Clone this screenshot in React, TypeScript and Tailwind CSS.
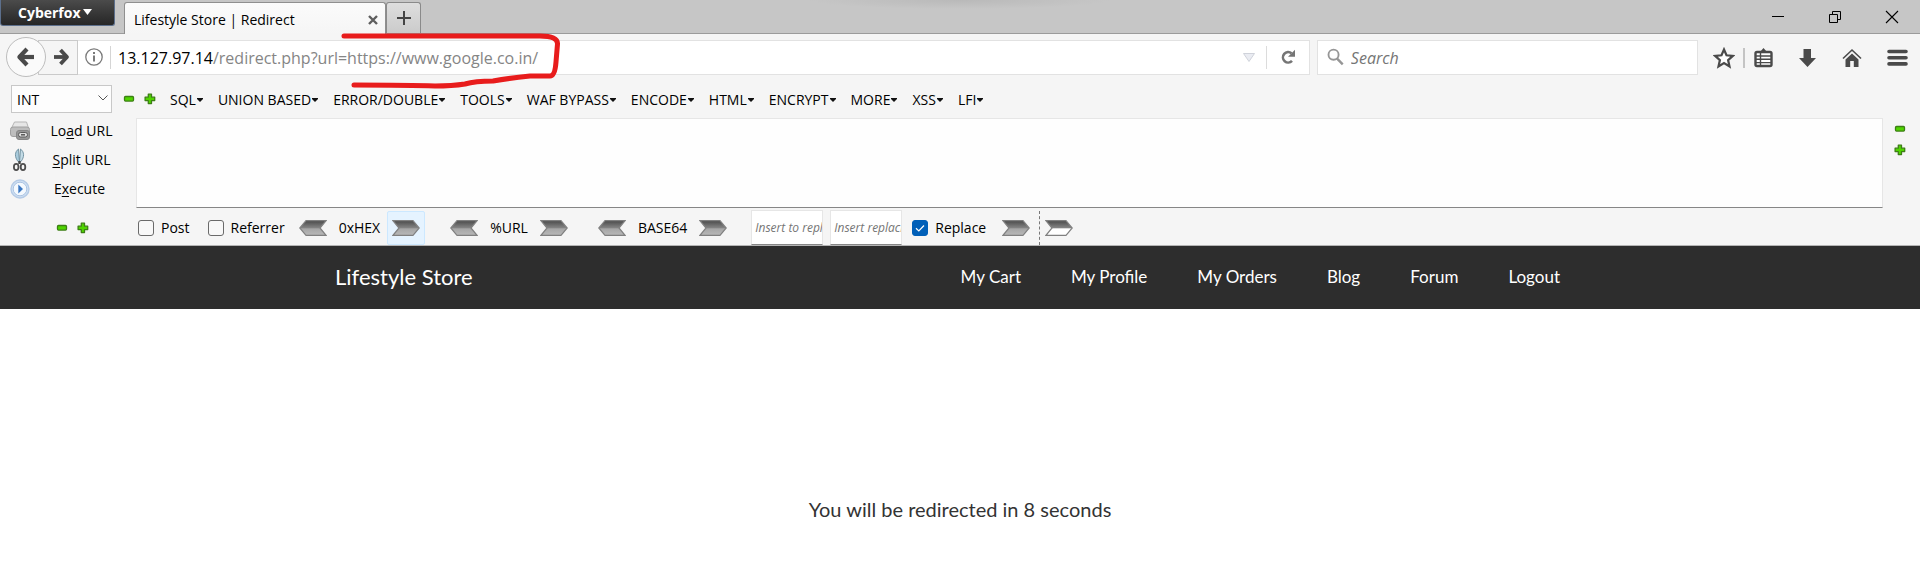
import React from "react";

const ui = "font-['Open_Sans','Noto_Sans',sans-serif]";

function Minus() {
  return (
    <svg width="12" height="12" viewBox="0 0 12 12">
      <rect x="1.5" y="3.5" width="9" height="4.6" rx="1" fill="#4fd400" stroke="#3c7f14" strokeWidth="1.3" />
    </svg>
  );
}

function Plus() {
  return (
    <svg width="12" height="12" viewBox="0 0 12 12">
      <path
        d="M4.3 1.2h3.2v3h3.2v3.4H7.5v3H4.3v-3H1.1V4.2h3.2z"
        fill="#4fd400"
        stroke="#3c7f14"
        strokeWidth="1.3"
        strokeLinejoin="round"
      />
    </svg>
  );
}

function Arrow({ id, left = false, light = false }: { id: string; left?: boolean; light?: boolean }) {
  return (
    <svg width="28" height="16" viewBox="0 0 28 16">
      <defs>
        <linearGradient id={id} x1="0" y1="0" x2="0" y2="1">
          <stop offset="0" stopColor="#4a4a4a" />
          <stop offset="0.5" stopColor="#858585" />
          <stop offset="0.55" stopColor={light ? "#ffffff" : "#a6a6a6"} />
          <stop offset="1" stopColor={light ? "#ffffff" : "#b8b8b8"} />
        </linearGradient>
      </defs>
      <path
        d={left ? "M27 .7H7L.8 8 7 15.3h20L21 8z" : "M1 .7h20L27.2 8 21 15.3H1L7 8z"}
        fill={`url(#${id})`}
        stroke="#808080"
        strokeWidth="1.2"
      />
    </svg>
  );
}

function Codec({ name, hot = false, id }: { name: string; hot?: boolean; id: string }) {
  return (
    <div className="flex items-center">
      <button aria-label={`${name} decode`} className="flex h-[34px] w-[38px] items-center justify-center">
        <Arrow id={id + "l"} left />
      </button>
      <span className="px-[7px] text-center">{name}</span>
      <button
        aria-label={`${name} encode`}
        className={
          hot
            ? "flex h-[34px] w-[38px] items-center justify-center rounded-[2px] border border-[#cce8ff] bg-[#e5f3ff]"
            : "flex h-[34px] w-[38px] items-center justify-center"
        }
      >
        <Arrow id={id + "r"} />
      </button>
    </div>
  );
}

function TitleBar() {
  return (
    <header className="flex h-[34px] items-start border-b border-[#9b9b9b] bg-[#c6c6c6] bg-[radial-gradient(150px_9px_at_50%_0,#b9b9b9,#c6c6c6)]">
      <button className="flex h-[26px] w-[115px] items-start gap-[2px] rounded-b-[3px] border border-t-0 border-[#5c6f8c] bg-linear-to-b from-[#4b4b4b] to-[#262626] pt-[3px] pl-[17px] text-[14px] leading-[20px] font-bold text-white">
        Cyberfox
        <svg width="9" height="6" viewBox="0 0 9 6" className="mt-[6px]">
          <path d="M0 0h9L4.500 6z" fill="#fff" />
        </svg>
      </button>
      <div className="mt-[2px] ml-[9px] flex h-[32px] w-[262px] items-center justify-between rounded-t-[3px] border border-b-0 border-[#8f8f8f] bg-linear-to-b from-[#fbfbfb] to-[#f5f5f5] pt-[2px] pr-[7px] pl-[9px]">
        <span className="text-[14px] leading-[20px]">Lifestyle Store | Redirect</span>
        <button aria-label="Close tab" className="flex">
          <svg width="10" height="10" viewBox="0 0 10 10">
            <path d="M1 1l8 8M9 1L1 9" stroke="#5e5e5e" strokeWidth="2.4" />
          </svg>
        </button>
      </div>
      <button
        aria-label="New tab"
        className="mt-[2px] flex h-[31px] w-[35px] items-center justify-center rounded-t-[3px] border border-b-0 border-[#8a8a8a] bg-linear-to-b from-[#dedede] to-[#cbcbcb]"
      >
        <svg width="16" height="16" viewBox="0 0 16 16">
          <path d="M8 1v14M1 8h14" stroke="#444" strokeWidth="2" />
        </svg>
      </button>
      <div className="ml-auto flex h-[33px] items-center">
        <button aria-label="Minimize" className="flex w-[57px] justify-center">
          <svg width="14" height="14" viewBox="0 0 14 14">
            <path d="M1 6.5h12" stroke="#000" />
          </svg>
        </button>
        <button aria-label="Restore" className="flex w-[57px] justify-center">
          <svg width="14" height="14" viewBox="0 0 14 14" fill="none" stroke="#000">
            <path d="M1.5 4.5h8v8h-8zM4.5 4V1.5h8v8H10" />
          </svg>
        </button>
        <button aria-label="Close" className="flex w-[57px] justify-center">
          <svg width="14" height="14" viewBox="0 0 14 14">
            <path d="M1 1l12 12M13 1L1 13" stroke="#000" strokeWidth="1.1" />
          </svg>
        </button>
      </div>
    </header>
  );
}

function NavBar() {
  return (
    <div className="flex h-[46px] items-center pl-[6px]">
      <button
        aria-label="Back"
        className="z-10 flex h-[40px] w-[40px] shrink-0 items-center justify-center rounded-full border border-[#bdbdbd] bg-[#fafafa]"
      >
        <svg width="20" height="20" viewBox="0 0 20 20" fill="none" stroke="#4a4a4a" strokeWidth="4.2">
          <path d="M3 10h15" />
          <path d="M11 2L3.4 10l7.6 8" strokeLinejoin="round" />
        </svg>
      </button>
      <button
        aria-label="Forward"
        className="-ml-[8px] flex h-[35px] w-[40px] shrink-0 items-center justify-center border border-[#cacaca] bg-[#f5f5f5] pl-[7px]"
      >
        <svg width="16" height="18" viewBox="0 0 16 18" fill="none" stroke="#4a4a4a" strokeWidth="3.8">
          <path d="M0 9h13" />
          <path d="M6.500 2L13 9l-6.500 7" strokeLinejoin="round" />
        </svg>
      </button>
      <div className="flex h-[35px] flex-1 items-center border border-l-0 border-[#e2e2e2] bg-white">
        <button aria-label="Site information" className="ml-[7px] flex">
          <svg width="18" height="18" viewBox="0 0 18 18" fill="none" stroke="#7a7a7a" strokeWidth="1.3">
            <circle cx="9" cy="9" r="8.200" />
            <path d="M9 7.500v6M9 4v2" strokeWidth="2" />
          </svg>
        </button>
        <div className="ml-[7px] h-[23px] w-px bg-[#d5d5d5]" />
        <div className="ml-[7px] flex-1 pt-[2px] text-[16px] leading-[24px] text-[#858585]">
          <span className="text-black">13.127.97.14</span>/redirect.php?url=https://www.google.co.in/
        </div>
        <svg width="12" height="9" viewBox="0 0 12 9">
          <path d="M.5.500h11L6 8.500z" fill="#eaecf2" stroke="#cfd2da" />
        </svg>
        <div className="ml-[11px] h-[23px] w-px bg-[#dcdcdc]" />
        <button aria-label="Reload" className="mr-[13px] ml-[14px] flex">
          <svg width="15" height="16" viewBox="0 0 15 16">
            <path d="M11 11.800A5.200 5.200 0 1 1 10.500 4.300" fill="none" stroke="#757575" strokeWidth="2.600" />
            <path d="M14 .800v7H7z" fill="#757575" />
          </svg>
        </button>
      </div>
      <div className="ml-[7px] flex h-[35px] w-[381px] items-center border border-[#e2e2e2] bg-white pl-[9px]">
        <svg width="18" height="18" viewBox="0 0 18 18" fill="none" stroke="#969696">
          <circle cx="7" cy="6.500" r="5.400" strokeWidth="2" />
          <path d="M10.800 10.800l6 6" strokeWidth="2.600" />
        </svg>
        <input
          aria-label="Search"
          placeholder="Search"
          className="ml-[7px] w-full bg-transparent pt-[2px] text-[16px] italic outline-none placeholder:text-[#757575]"
        />
      </div>
      <div className="flex items-center pt-[2px] pr-[12px] pl-[15px]">
        <button aria-label="Bookmark" className="flex">
          <svg width="22" height="22" viewBox="0 0 22 22">
            <path
              d="M11 2.500l2.500 5.800 6.300.6-4.700 4.200 1.400 6.300L11 16.100l-5.500 3.300 1.400-6.300-4.700-4.200 6.300-.6z"
              fill="#fff"
              stroke="#4a4a4a"
              strokeWidth="2.200"
            />
          </svg>
        </button>
        <div className="ml-[8px] h-[20px] w-[2px] bg-[#c4c4c4]" />
        <button aria-label="Bookmarks list" className="ml-[9px] flex">
          <svg width="19" height="20" viewBox="0 0 19 20">
            <path d="M6 4l3.500-4L13 4z" fill="#4a4a4a" />
            <rect x="1.500" y="4" width="16" height="14" rx="1.500" fill="#fff" stroke="#4a4a4a" strokeWidth="2.400" />
            <path d="M2 8h15M2 11.300h15M2 14.600h15M6.500 5v12" stroke="#4a4a4a" strokeWidth="1.400" />
          </svg>
        </button>
        <button aria-label="Downloads" className="ml-[25px] flex">
          <svg width="19" height="20" viewBox="0 0 19 20">
            <path d="M5.500 1h7.500v9h5L9.500 19 1 10h4.500z" fill="#4a4a4a" />
          </svg>
        </button>
        <button aria-label="Home" className="ml-[25px] flex">
          <svg width="20" height="20" viewBox="0 0 20 20">
            <path d="M1 10.500L10 2l9 8.500" fill="none" stroke="#4a4a4a" strokeWidth="1.600" />
            <path d="M3.500 11.500L10 5.500l6.500 6V19h-4.700v-6H8.200v6H3.500z" fill="#4a4a4a" />
          </svg>
        </button>
        <button aria-label="Menu" className="ml-[25px] flex">
          <svg width="21" height="20" viewBox="0 0 21 20">
            <path d="M2 3.500h17M2 9.700h17M2 15.900h17" stroke="#4a4a4a" strokeWidth="3.600" strokeLinecap="round" />
          </svg>
        </button>
      </div>
    </div>
  );
}

const menus = ["SQL", "UNION BASED", "ERROR/DOUBLE", "TOOLS", "WAF BYPASS", "ENCODE", "HTML", "ENCRYPT", "MORE", "XSS", "LFI"];

function MenuRow() {
  return (
    <div className="flex h-[38px] items-center pl-[11px]">
      <div className="relative">
        <select
          aria-label="Database type"
          className="block h-[28px] w-[101px] appearance-none border border-[#c8c8c8] bg-[#fdfdfd] pl-[5px] text-[14px]"
        >
          <option>INT</option>
        </select>
        <svg width="10" height="6" viewBox="0 0 10 6" className="pointer-events-none absolute top-[10px] right-[4px]">
          <path d="M.500.500L5 5 9.500.500" fill="none" stroke="#555" />
        </svg>
      </div>
      <div className="flex gap-[9px] pl-[11px]">
        <button aria-label="Remove tab"><Minus /></button>
        <button aria-label="Add tab"><Plus /></button>
      </div>
      <nav className="flex gap-[15px] pt-px pl-[14px]">
        {menus.map((m) => (
          <button key={m} className="flex items-center gap-px text-[14px] leading-[20px]">
            {m}
            <svg width="6" height="4" viewBox="0 0 6 4">
              <path d="M0 0h6v1L3 4 0 1z" fill="#111" />
            </svg>
          </button>
        ))}
      </nav>
    </div>
  );
}

function Printer() {
  return (
    <svg width="20" height="20" viewBox="0 0 20 20">
      <path d="M4.500 1h12l2 6H1.500z" fill="#e6e6e6" stroke="#b5b5b5" />
      <rect x=".500" y="6" width="19" height="9.500" rx="2.500" fill="#bdbdbd" stroke="#a0a0a0" />
      <rect x="6.500" y="9.500" width="13" height="9" rx="2.500" fill="#969696" stroke="#858585" />
      <rect x="8.500" y="11.500" width="9" height="4.500" rx="2.200" fill="#ddd" stroke="#5c5c5c" />
      <path d="M11 13.800h4" stroke="#555" strokeWidth="1.500" />
    </svg>
  );
}

function Scissors() {
  return (
    <svg width="20" height="24" viewBox="0 0 20 24">
      <path d="M8.500 1C4.500 4 4.500 9 8 13.500l1.500 1z" fill="#a9cbdc" stroke="#6b8c9c" strokeWidth=".900" />
      <path d="M10.500 1C14.500 4 14.500 9 11 13.500l-1.500 1z" fill="#c3dbe6" stroke="#6b8c9c" strokeWidth=".900" />
      <path d="M9.500 13v3" stroke="#444" strokeWidth="2.400" />
      <ellipse cx="6.200" cy="19" rx="2.300" ry="3.100" fill="none" stroke="#4d4d4d" strokeWidth="1.800" />
      <ellipse cx="13" cy="19" rx="2.300" ry="3.100" fill="none" stroke="#4d4d4d" strokeWidth="1.800" />
    </svg>
  );
}

function Play() {
  return (
    <svg width="20" height="20" viewBox="0 0 20 20">
      <circle cx="10" cy="10" r="9" fill="#cfe0f3" stroke="#b5cbe6" strokeWidth="1.400" />
      <circle cx="10" cy="10" r="6.800" fill="#f4f9fe" stroke="#9db9dc" strokeWidth=".800" />
      <path d="M8.300 5.500L13 10l-4.700 4.500z" fill="#3b78c3" />
    </svg>
  );
}

function Editor() {
  return (
    <div className="flex">
      <div className="flex w-[136px] shrink-0 flex-col text-[14px] leading-[20px]">
        <button className="flex h-[29px] items-center pb-[4px] pl-[10px]">
          <Printer />
          <span className="w-[103px] text-center">Lo<u className="underline-offset-2">a</u>d URL</span>
        </button>
        <button className="flex h-[29px] items-center pb-[4px] pl-[10px]">
          <Scissors />
          <span className="w-[103px] text-center"><u className="underline-offset-2">S</u>plit URL</span>
        </button>
        <button className="flex h-[29px] items-center pb-[4px] pl-[10px]">
          <Play />
          <span className="w-[99px] text-center">E<u className="underline-offset-2">x</u>ecute</span>
        </button>
      </div>
      <textarea
        aria-label="URL"
        className="block h-[90px] flex-1 resize-none border border-[#e6e6e6] border-b-[#868686] bg-[#fefefe] outline-none"
      />
      <div className="flex w-[37px] shrink-0 flex-col items-center gap-[9px] pt-[5px] pr-[3px]">
        <button aria-label="Shrink" className="flex"><Minus /></button>
        <button aria-label="Grow" className="flex"><Plus /></button>
      </div>
    </div>
  );
}

function Check({ label, on = false }: { label: string; on?: boolean }) {
  return (
    <label className="flex items-center gap-[7px]">
      <span className="relative flex">
        <input
          type="checkbox"
          defaultChecked={on}
          className="h-[16px] w-[16px] appearance-none rounded-[3px] border border-[#6a6a6a] bg-[#f8f8f8] checked:border-[#005fb8] checked:bg-[#005fb8]"
        />
        {on && (
          <svg width="16" height="16" viewBox="0 0 16 16" className="pointer-events-none absolute inset-0">
            <path d="M4 8.300l2.800 2.700L12 5.500" fill="none" stroke="#fff" strokeWidth="1.200" />
          </svg>
        )}
      </span>
      {label}
    </label>
  );
}

function OptionsRow() {
  return (
    <div className="flex h-[38px] items-center border-b border-[#b4b4b4] pt-[2px] text-[14px] leading-[20px]">
      <div className="flex w-[138px] gap-[9px] pl-[56px]">
        <button aria-label="Smaller"><Minus /></button>
        <button aria-label="Larger"><Plus /></button>
      </div>
      <div className="flex gap-[18px]">
        <Check label="Post" />
        <Check label="Referrer" />
      </div>
      <div className="flex gap-[20px] pl-[9px]">
        <Codec name="0xHEX" hot id="hex" />
        <Codec name="%URL" id="url" />
        <Codec name="BASE64" id="b64" />
      </div>
      <div className="flex gap-[7px] pl-[19px]">
        {["Insert to replace", "Insert replacing"].map((p) => (
          <input
            key={p}
            aria-label={p}
            placeholder={p}
            className="h-[35px] w-[72px] border border-[#e6e6e6] border-b-[#868686] bg-white pl-[3px] text-[12px] italic outline-none placeholder:text-[#757575]"
          />
        ))}
      </div>
      <div className="pl-[10px]">
        <Check label="Replace" on />
      </div>
      <button aria-label="Run replace" className="ml-[16px] flex"><Arrow id="run" /></button>
      <div className="ml-[9px] h-[34px] border-l border-dashed border-[#777]" />
      <button aria-label="Run all" className="ml-[5px] flex"><Arrow id="all" light /></button>
    </div>
  );
}

const links = ["My Cart", "My Profile", "My Orders", "Blog", "Forum", "Logout"];

export default function App() {
  return (
    <div className={`${ui} relative min-h-screen bg-white text-black`}>
      <div className="bg-[#f5f5f5]">
        <TitleBar />
        <NavBar />
        <MenuRow />
        <Editor />
        <OptionsRow />
      </div>
      <svg width="240" height="64" viewBox="330 28 240 64" className="pointer-events-none absolute top-[28px] left-[330px] z-20">
        <path
          d="M344 36H540Q558 36 557.500 44L556 62Q555 76 550 76L530 76Q510 78 493 81Q475 81 465 84Q452 86 435 86Q410 85 354 85"
          fill="none"
          stroke="#e81c1c"
          strokeWidth="5"
          strokeLinecap="round"
          strokeLinejoin="round"
        />
      </svg>
      <div className="bg-[#2d2d2d] font-['Lato',sans-serif] text-white">
        <div className="mx-auto flex h-[63px] max-w-[1250px] items-center justify-between pb-[2px]">
          <a href="#" className="text-[22px] leading-[30px]">Lifestyle Store</a>
          <nav className="flex">
            {links.map((l) => (
              <a key={l} href="#" className="px-[25px] text-[17px] leading-[26px]">{l}</a>
            ))}
          </nav>
        </div>
      </div>
      <main className="flex justify-center pt-[185px] font-['Lato',sans-serif] text-[20px] leading-[30px] text-[#333]">
        <p>You will be redirected in 8 seconds</p>
      </main>
    </div>
  );
}
